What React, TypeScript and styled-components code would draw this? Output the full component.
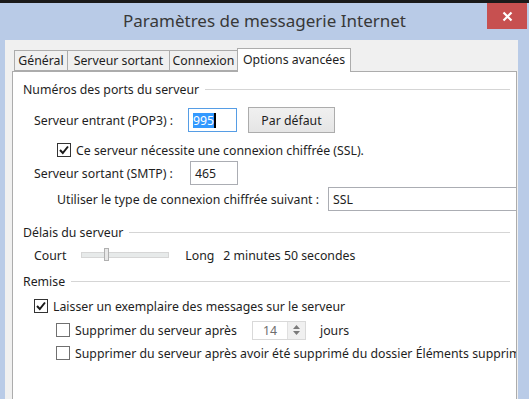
import React from "react"
import styled, { createGlobalStyle } from "styled-components"

const Global = createGlobalStyle`
    html, body {
        margin: 0;
        padding: 0;
        background: #b9cbe7;
        overflow: hidden;
    }
    body {
        width: 529px;
        height: 399px;
        font-family: "Noto Sans", "Open Sans", sans-serif;
        font-size: 12.3px;
        color: #1e1e1e;
    }
`

const TopStrip = styled.div`
    height: 3px;
    background: #1a1a1a;
`

const TitleBar = styled.div`
    display: grid;
    grid-template-columns: 1fr auto 1fr;
    height: 37px;
    align-items: start;
`

const Title = styled.div`
    grid-column: 2;
    padding-top: 6px;
    font-size: 17px;
    color: #383838;
`

const CloseButton = styled.div`
    grid-column: 3;
    justify-self: end;
    margin-right: 2px;
    width: 40px;
    height: 26px;
    background: #c75050;
    display: flex;
    align-items: center;
    justify-content: center;
`

const Body = styled.div`
    margin-left: 5px;
    width: 513px;
    height: 359px;
    background: #f0f0f0;
    padding: 8px 0 0 7px;
    box-sizing: border-box;
    display: flex;
    flex-direction: column;
`

const TabRow = styled.div`
    display: flex;
    align-items: flex-end;
    padding-left: 3px;
    height: 23px;
    position: relative;
    z-index: 1;
`

const Tab = styled.div<{ $active?: boolean; $w: number }>`
    box-sizing: border-box;
    width: ${p => p.$w}px;
    height: ${p => (p.$active ? '24px' : '21px')};
    margin-bottom: ${p => (p.$active ? '-1px' : '0')};
    margin-left: -1px;
    border: 1px solid #acacac;
    border-bottom: ${p => (p.$active ? 'none' : '1px solid #acacac')};
    background: ${p => (p.$active ? '#fff' : '#f0f0f0')};
    display: flex;
    align-items: center;
    justify-content: center;
    padding-bottom: ${p => (p.$active ? '3px' : '0')};
`

const Panel = styled.div`
    flex: 1;
    width: 505px;
    box-sizing: border-box;
    background: #fff;
    border: 1px solid #acacac;
    border-bottom: none;
    padding: 6px 6px 0 10px;
    display: flex;
    flex-direction: column;
    overflow: hidden;
`

const GroupTitle = styled.div<{ $mt?: number }>`
    display: flex;
    align-items: center;
    gap: 6px;
    height: 22px;
    margin-top: ${p => p.$mt ?? 0}px;
    &::after {
        content: '';
        flex: 1;
        height: 1px;
        background: #d5d5d5;
    }
`

const Row = styled.div<{ $indent: number; $h: number }>`
    display: flex;
    align-items: center;
    padding-left: ${p => p.$indent}px;
    height: ${p => p.$h}px;
    white-space: nowrap;
`

const Label = styled.span<{ $w?: number }>`
    display: inline-block;
    width: ${p => (p.$w ? `${p.$w}px` : 'auto')};
    flex-shrink: 0;
`

const TextBox = styled.div<{ $focused?: boolean; $w: number }>`
    box-sizing: border-box;
    width: ${p => p.$w}px;
    height: 24px;
    border: 1px solid ${p => (p.$focused ? '#569de5' : '#abadb3')};
    background: #fff;
    display: flex;
    align-items: center;
    padding-left: 4px;
    flex-shrink: 0;
`

const Selected = styled.span`
    background: #3399ff;
    color: #fff;
    border-right: 2px solid #000;
    line-height: 15px;
`

const PushButton = styled.div`
    box-sizing: border-box;
    width: 87px;
    height: 26px;
    margin-left: 11px;
    border: 1px solid #acacac;
    background: linear-gradient(#f0f0f0, #e5e5e5);
    display: flex;
    align-items: center;
    justify-content: center;
`

const Box = styled.div<{ $checked?: boolean }>`
    box-sizing: border-box;
    width: 14px;
    height: 14px;
    border: 1px solid ${p => (p.$checked ? '#333' : '#707070')};
    background: #fff;
    margin-right: 5px;
    flex-shrink: 0;
    display: flex;
    align-items: center;
    justify-content: center;
`

const Select = styled.div`
    box-sizing: border-box;
    height: 24px;
    flex: 1;
    margin-left: 9px;
    margin-right: -12px;
    border: 1px solid #abadb3;
    display: flex;
    align-items: center;
    padding-left: 4px;
    position: relative;
`

const DropHint = styled.div`
    position: absolute;
    right: 0;
    top: 2px;
    width: 4px;
    height: 18px;
    border: 1px solid #c5c5c5;
    border-right: none;
    background: #f4f4f4;
`

const Track = styled.div`
    position: relative;
    width: 86px;
    height: 4px;
    margin: 0 16px 0 15px;
    background: #e7eaea;
    border: 1px solid #d6d6d6;
`

const Thumb = styled.div`
    position: absolute;
    left: 22px;
    top: -5px;
    width: 3px;
    height: 11px;
    background: #e8e8e8;
    border: 1px solid #b0b0b0;
`

const Spinner = styled.div`
    box-sizing: border-box;
    width: 54px;
    height: 19px;
    margin: 0 14px 0 0;
    border: 1px solid #d9d9d9;
    background: #fff;
    display: flex;
    align-items: center;
    color: #6d6d6d;
`

const SpinValue = styled.span`
    flex: 1;
    padding-left: 10px;
`

const SpinArrows = styled.div`
    width: 17px;
    height: 17px;
    background: #f0f0f0;
    border-left: 1px solid #e0e0e0;
    display: flex;
    align-items: center;
    justify-content: center;
`

const Check = () => (
    <svg width="12" height="12" viewBox="0 0 12 12">
        <path d="M2 6 L4.8 9 L10 2.5" fill="none" stroke="#1a1a1a" strokeWidth="2" />
    </svg>
)

const CheckBox = ({ checked }: { checked?: boolean }) => (
    <Box $checked={checked}>{checked && <Check />}</Box>
)

export default function App() {
    return (
        <>
            <Global />
            <TopStrip />
            <TitleBar>
                <Title>Paramètres de messagerie Internet</Title>
                <CloseButton>
                    <svg width="11" height="11" viewBox="0 0 11 11">
                        <path d="M1.5 1.5 L9.5 9.5 M9.5 1.5 L1.5 9.5" stroke="#fff" strokeWidth="2.2" />
                    </svg>
                </CloseButton>
            </TitleBar>
            <Body>
                <TabRow>
                    <Tab $w={54}>Général</Tab>
                    <Tab $w={103}>Serveur sortant</Tab>
                    <Tab $w={69}>Connexion</Tab>
                    <Tab $w={114} $active>Options avancées</Tab>
                </TabRow>
                <Panel>
                    <GroupTitle>Numéros des ports du serveur</GroupTitle>
                    <Row $indent={11} $h={40}>
                        <Label $w={154}>Serveur entrant (POP3) :</Label>
                        <TextBox $w={49} $focused><Selected>995</Selected></TextBox>
                        <PushButton>Par défaut</PushButton>
                    </Row>
                    <Row $indent={34} $h={20}>
                        <CheckBox checked />
                        Ce serveur nécessite une connexion chiffrée (SSL).
                    </Row>
                    <Row $indent={11} $h={26}>
                        <Label $w={156}>Serveur sortant (SMTP) :</Label>
                        <TextBox $w={48}>465</TextBox>
                    </Row>
                    <Row $indent={34} $h={26}>
                        <Label>Utiliser le type de connexion chiffrée suivant :</Label>
                        <Select>SSL<DropHint /></Select>
                    </Row>
                    <GroupTitle $mt={9}>Délais du serveur</GroupTitle>
                    <Row $indent={11} $h={24}>
                        <Label>Court</Label>
                        <Track><Thumb /></Track>
                        <Label $w={38}>Long</Label>
                        2 minutes 50 secondes
                    </Row>
                    <GroupTitle $mt={3}>Remise</GroupTitle>
                    <Row $indent={11} $h={28}>
                        <CheckBox checked />
                        Laisser un exemplaire des messages sur le serveur
                    </Row>
                    <Row $indent={33} $h={20}>
                        <CheckBox />
                        <Label $w={177}>Supprimer du serveur après</Label>
                        <Spinner>
                            <SpinValue>14</SpinValue>
                            <SpinArrows>
                                <svg width="9" height="12" viewBox="0 0 9 12">
                                    <path d="M4.5 1 L8 5 H1 Z M4.5 11 L8 7 H1 Z" fill="#7a7a7a" />
                                </svg>
                            </SpinArrows>
                        </Spinner>
                        jours
                    </Row>
                    <Row $indent={33} $h={26}>
                        <CheckBox />
                        Supprimer du serveur après avoir été supprimé du dossier Éléments supprimés
                    </Row>
                </Panel>
            </Body>
        </>
    )
}
